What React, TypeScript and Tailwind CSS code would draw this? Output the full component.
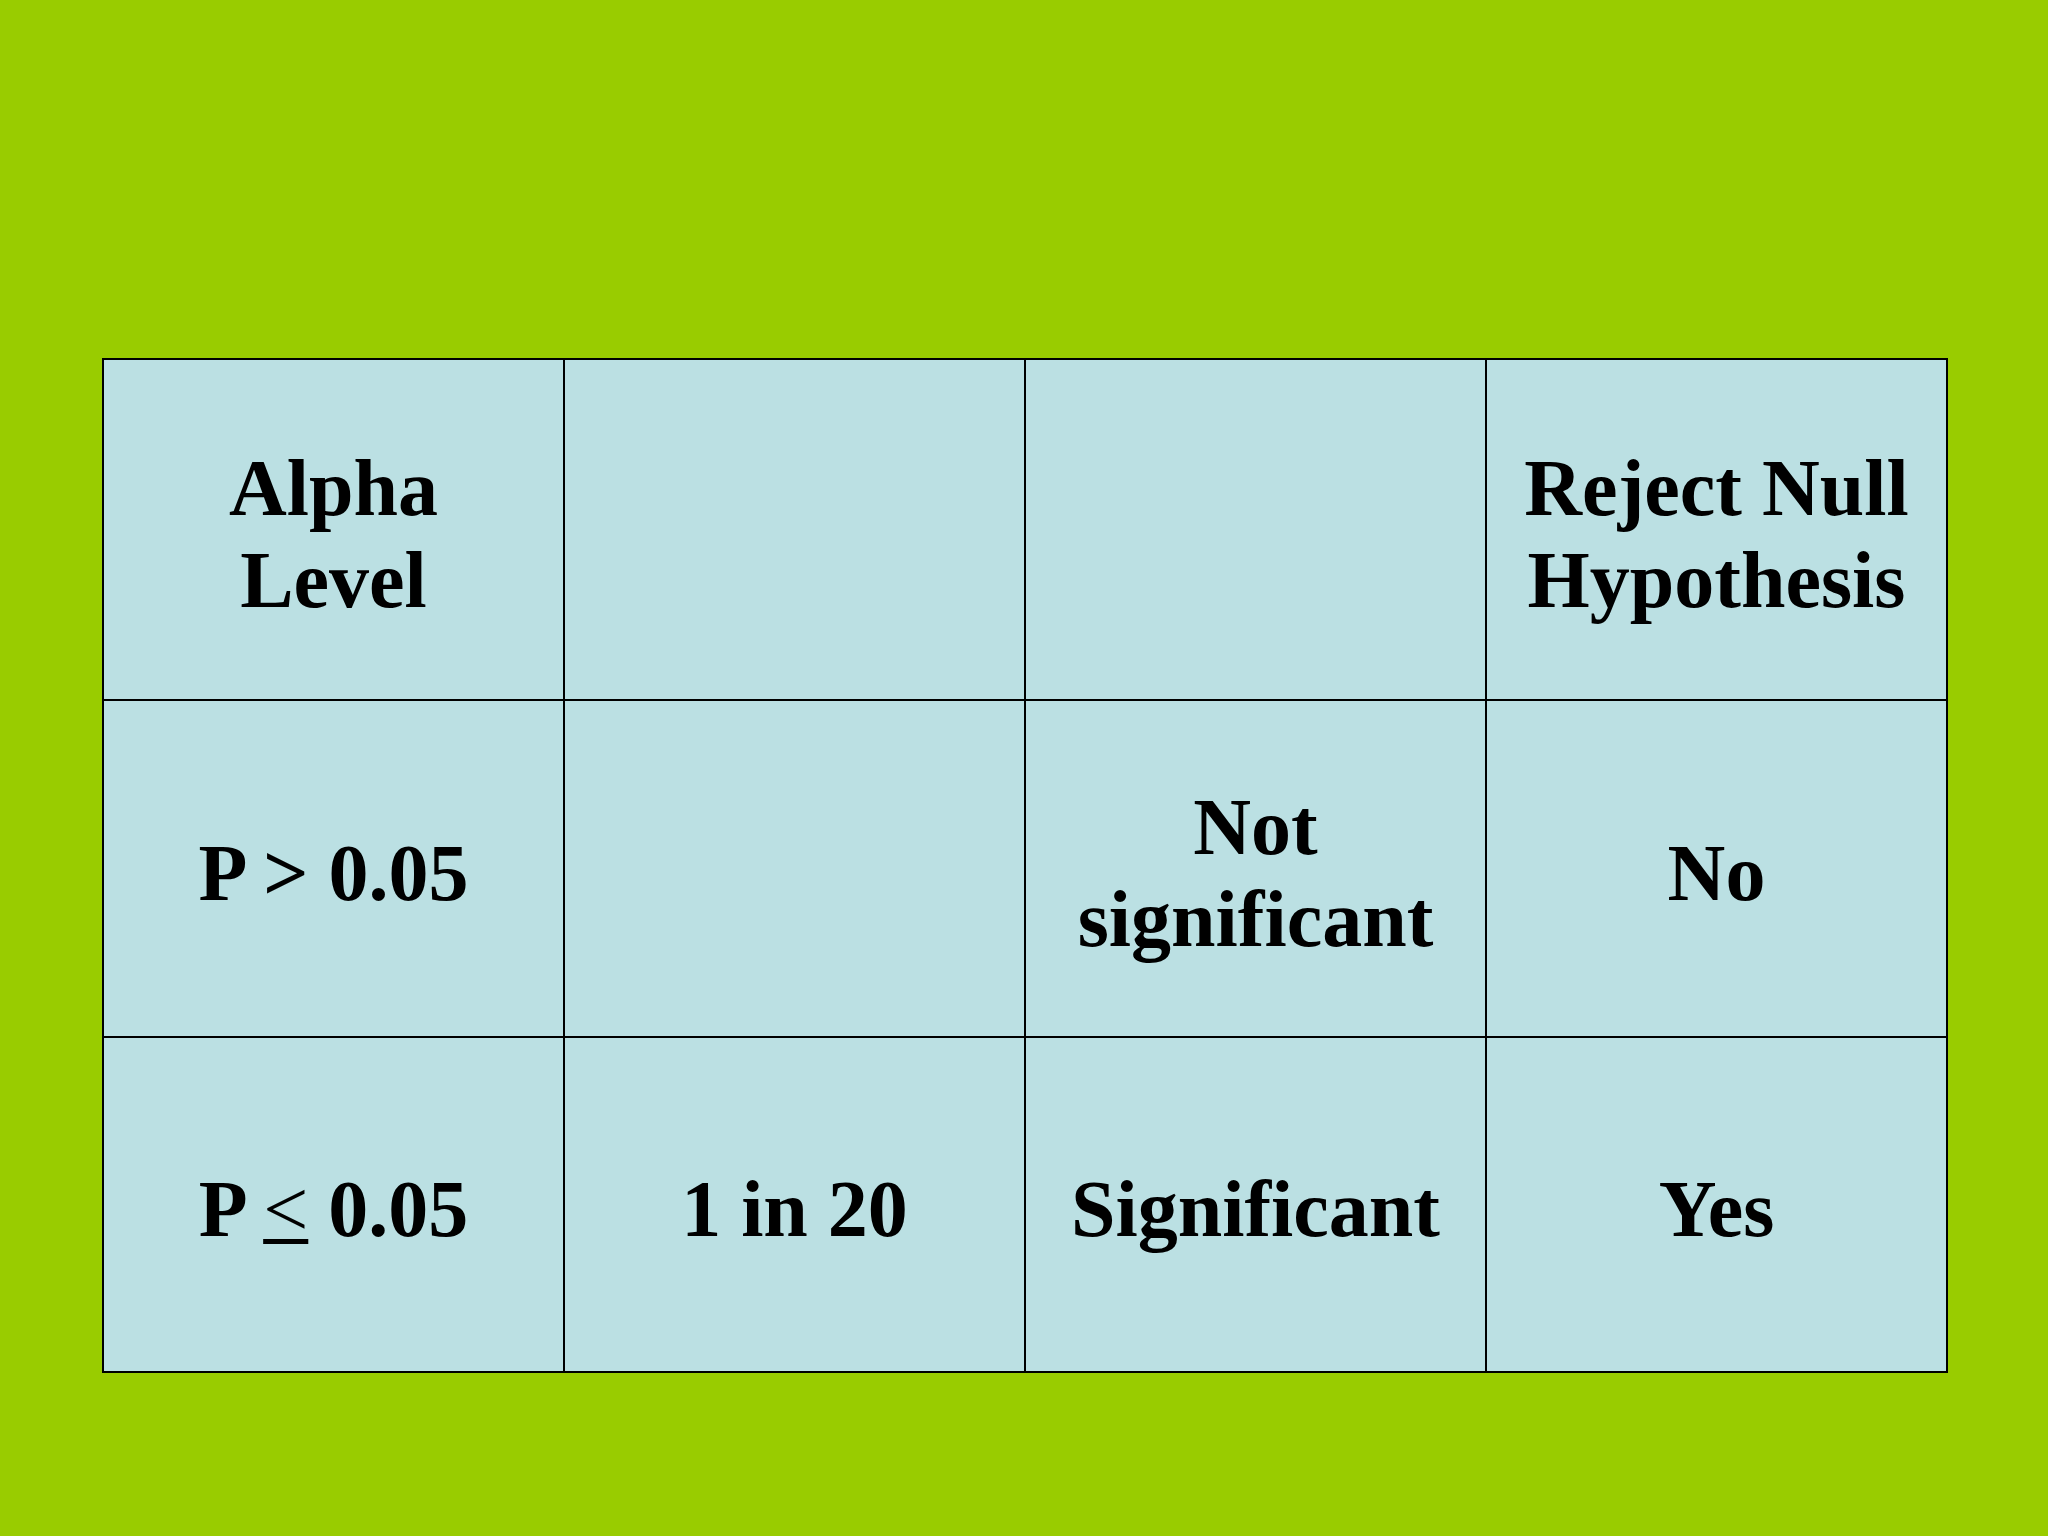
import React from "react";

const cell =
  "border-2 border-black bg-[#bbe0e3] text-center align-middle text-black font-bold text-[80px] leading-[92px] w-[461px] pt-[9px] p-0";

export default function App() {
  return (
    <div
      className="w-[2048px] h-[1536px] bg-[#99cc00] pt-[358px] pl-[102px]"
      style={{ fontFamily: '"Liberation Serif", "Times New Roman", serif' }}
    >
      <table className="border-collapse w-[1843px] table-fixed">
        <tbody>
          <tr className="h-[341px]">
            <td className={cell}>
              Alpha
              <br />
              Level
            </td>
            <td className={cell}></td>
            <td className={cell}></td>
            <td className={cell}>
              Reject Null
              <br />
              Hypothesis
            </td>
          </tr>
          <tr className="h-[337px]">
            <td className={cell}>P &gt; 0.05</td>
            <td className={cell}></td>
            <td className={cell}>
              Not
              <br />
              significant
            </td>
            <td className={cell}>No</td>
          </tr>
          <tr className="h-[335px]">
            <td className={cell}>
              P{" "}
              <span className="font-normal underline decoration-[5px] underline-offset-[3px]">
                &lt;
              </span>{" "}
              0.05
            </td>
            <td className={cell}>1 in 20</td>
            <td className={cell}>Significant</td>
            <td className={cell}>Yes</td>
          </tr>
        </tbody>
      </table>
    </div>
  );
}
